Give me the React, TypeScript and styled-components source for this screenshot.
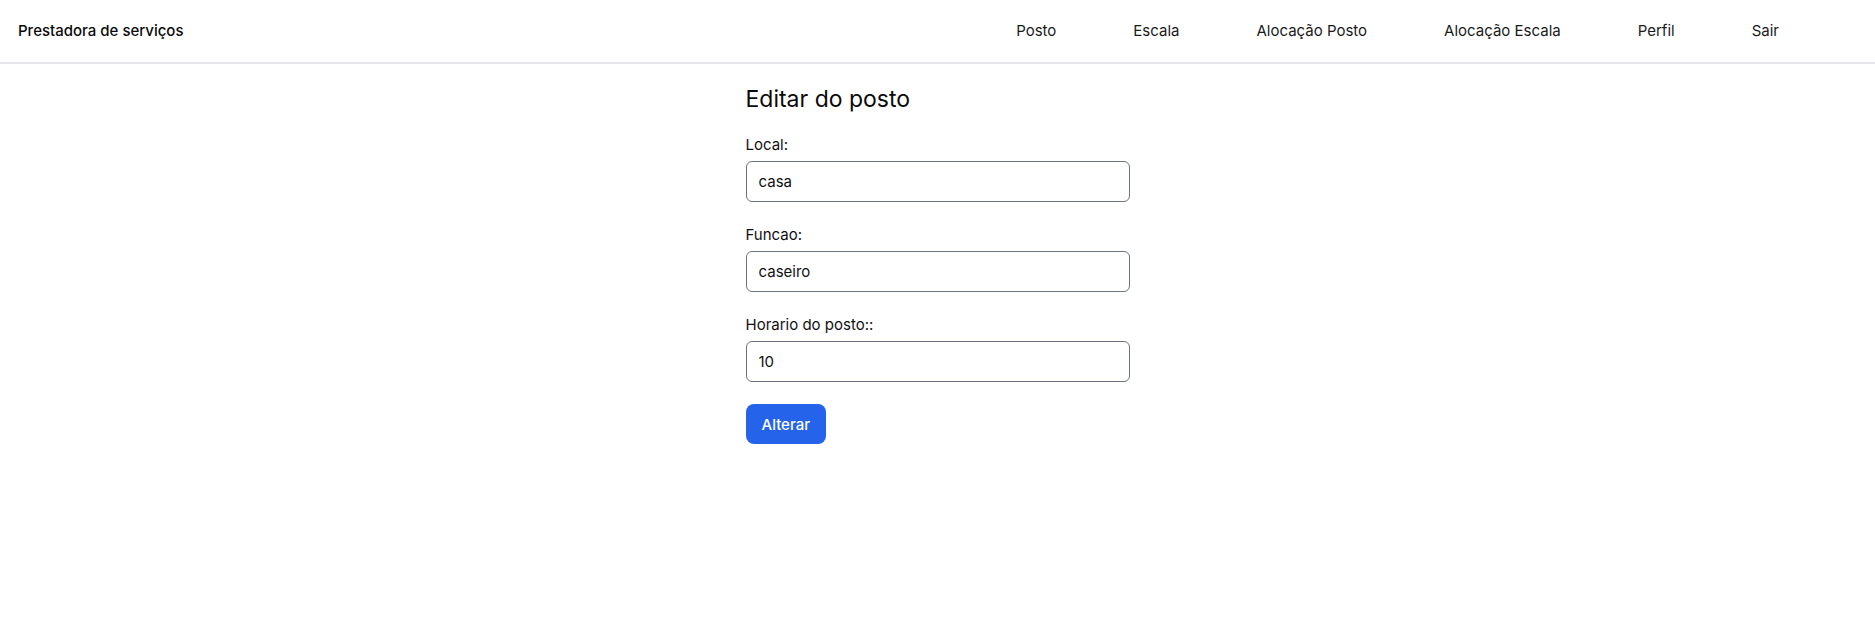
import React, { useState } from "react";
import styled, { createGlobalStyle } from "styled-components";

const GlobalStyle = createGlobalStyle`
  html, body {
    margin: 0;
    padding: 0;
    background: #ffffff;
    font-family: Inter, "Noto Sans", "Liberation Sans", sans-serif;
    color: #111111;
  }
  * {
    box-sizing: border-box;
  }
`;

const Header = styled.header`
  height: 64px;
  display: flex;
  align-items: center;
  justify-content: space-between;
  padding: 0 96px 1px 18px;
  border-bottom: 2px solid #e5e7eb;
`;

const Brand = styled.div`
  font-size: 15px;
  font-weight: 500;
  color: #0a0a0a;
`;

const Nav = styled.nav`
  display: flex;
  align-items: center;
  gap: 77px;
`;

const NavLink = styled.a`
  font-size: 15px;
  color: #1a1a1a;
  text-decoration: none;
  cursor: pointer;
`;

const Main = styled.main`
  display: flex;
  justify-content: center;
  padding-top: 19px;
`;

const Form = styled.form`
  width: 384px;
  display: flex;
  flex-direction: column;
`;

const Heading = styled.h2`
  margin: 0 0 19px;
  font-size: 23px;
  line-height: 32px;
  font-weight: 400;
  color: #0a0a0a;
`;

const Field = styled.div`
  display: flex;
  flex-direction: column;
  margin-bottom: 22px;
`;

const Label = styled.label`
  font-size: 15px;
  line-height: 22px;
  margin-bottom: 5px;
  color: #111111;
`;

const Input = styled.input`
  height: 41px;
  padding: 0 12px;
  font-family: inherit;
  font-size: 15px;
  color: #111111;
  border: 1px solid #6b7280;
  border-radius: 6px;
  outline: none;
  background: #fff;
`;

const SubmitButton = styled.button`
  align-self: flex-start;
  height: 40px;
  padding: 0 16px;
  border: none;
  border-radius: 8px;
  background: #2563eb;
  color: #ffffff;
  font-family: inherit;
  font-size: 15px;
  font-weight: 500;
  cursor: pointer;
`;

const links = ["Posto", "Escala", "Alocação Posto", "Alocação Escala", "Perfil", "Sair"];

const App = () => {
  const [posto, setPosto] = useState({ local: "casa", funcao: "caseiro", horario: "10" });

  const fields: { key: keyof typeof posto; label: string }[] = [
    { key: "local", label: "Local:" },
    { key: "funcao", label: "Funcao:" },
    { key: "horario", label: "Horario do posto::" },
  ];

  return (
    <>
      <GlobalStyle />
      <Header>
        <Brand>Prestadora de serviços</Brand>
        <Nav>
          {links.map((l) => (
            <NavLink key={l}>{l}</NavLink>
          ))}
        </Nav>
      </Header>
      <Main>
        <Form onSubmit={(e) => e.preventDefault()}>
          <Heading>Editar do posto</Heading>
          {fields.map((f) => (
            <Field key={f.key}>
              <Label htmlFor={f.key}>{f.label}</Label>
              <Input
                id={f.key}
                value={posto[f.key]}
                onChange={(e) => setPosto({ ...posto, [f.key]: e.target.value })}
              />
            </Field>
          ))}
          <SubmitButton type="submit">Alterar</SubmitButton>
        </Form>
      </Main>
    </>
  );
};

export default App;
